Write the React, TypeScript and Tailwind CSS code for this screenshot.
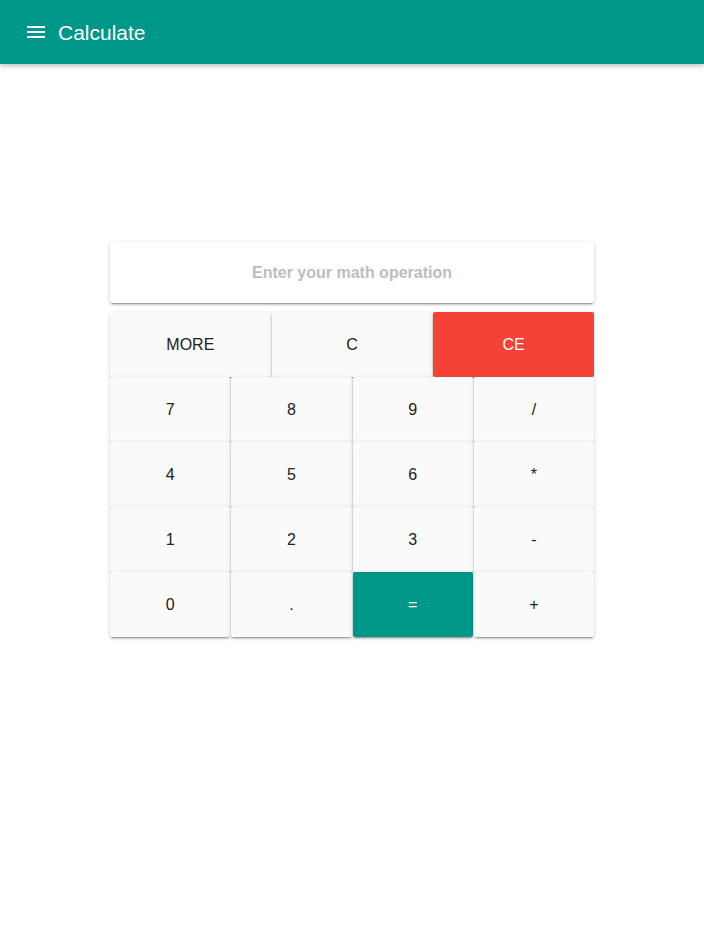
import { useState } from 'react';

const btnShadow =
  'shadow-[0_2px_2px_0_rgba(0,0,0,0.14),0_3px_1px_-2px_rgba(0,0,0,0.2),0_1px_5px_0_rgba(0,0,0,0.12)]';

function Key({ label, variant = 'plain', onClick }: { label: string; variant?: 'plain' | 'red' | 'teal'; onClick: () => void }) {
  const color =
    variant === 'red'
      ? 'bg-[#f44336] text-white'
      : variant === 'teal'
      ? 'bg-[#009688] text-white'
      : 'bg-[#fafafa] text-[#212121]';
  return (
    <button
      onClick={onClick}
      className={`h-[65px] rounded-[2px] text-[16px] ${color} ${btnShadow}`}
    >
      {label}
    </button>
  );
}

export default function App() {
  const [expr, setExpr] = useState('');

  const press = (k: string) => {
    if (k === 'C') setExpr((e) => e.slice(0, -1));
    else if (k === 'CE') setExpr('');
    else if (k === 'MORE') return;
    else if (k === '=') {
      try {
        // eslint-disable-next-line no-new-func
        setExpr(String(Function(`return (${expr})`)()));
      } catch {
        setExpr('');
      }
    } else setExpr((e) => e + k);
  };

  const keys = ['7', '8', '9', '/', '4', '5', '6', '*', '1', '2', '3', '-', '0', '.', '=', '+'];

  return (
    <div className="min-h-[939px] bg-white font-['Liberation_Sans',Arial,sans-serif]">
      {/* Toolbar */}
      <header className="h-16 bg-[#009688] flex items-center px-6 shadow-[0_2px_5px_rgba(0,0,0,0.26)]">
        <svg className="w-6 h-6 text-white" viewBox="0 0 24 24" fill="currentColor">
          <path d="M3 18h18v-2H3v2zm0-5h18v-2H3v2zm0-7v2h18V6H3z" />
        </svg>
        <h1 className="ml-[10px] text-white text-[21px] leading-none">Calculate</h1>
      </header>

      <div className="mx-auto w-[484px] mt-[178px]">
        {/* Display */}
        <input
          value={expr}
          onChange={(e) => setExpr(e.target.value)}
          placeholder="Enter your math operation"
          className={`w-full h-[61px] bg-white rounded-[2px] text-center text-[16px] font-bold text-[#212121] placeholder-[#bdbdbd] outline-none ${btnShadow}`}
        />

        {/* Keys */}
        <div className="mt-[9px] grid grid-cols-3 gap-x-px">
          <Key label="MORE" onClick={() => press('MORE')} />
          <Key label="C" onClick={() => press('C')} />
          <Key label="CE" variant="red" onClick={() => press('CE')} />
        </div>
        <div className="grid grid-cols-4 gap-x-px">
          {keys.map((k) => (
            <Key key={k} label={k} variant={k === '=' ? 'teal' : 'plain'} onClick={() => press(k)} />
          ))}
        </div>
      </div>
    </div>
  );
}
